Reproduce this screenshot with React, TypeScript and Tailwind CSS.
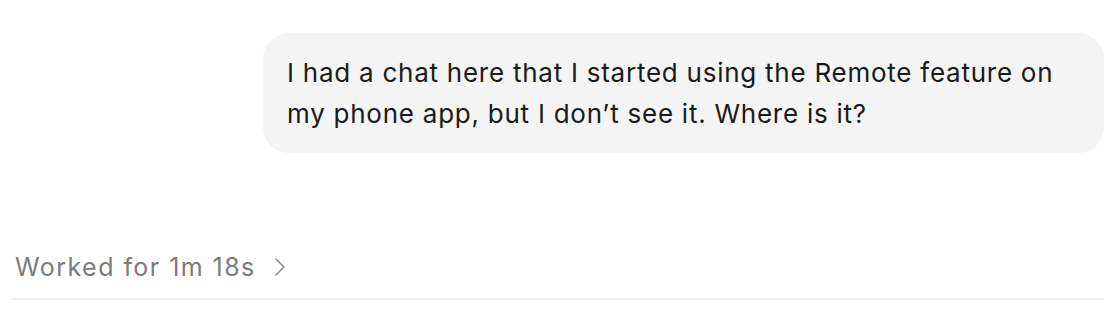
import React from "react";

export default function App() {
  return (
    <div className="w-[1120px] h-[326px] bg-white font-['Inter','Noto_Sans',sans-serif] overflow-hidden">
      <div className="flex justify-end pt-[33px] pr-[16px]">
        <div className="w-[841px] rounded-[26px] bg-[#f4f4f4] pl-[24px] pr-[36px] py-[19px] text-[26px] leading-[41px] text-[#1a1a1a] tracking-[0.75px]">
          I had a chat here that I started using the Remote feature on my phone app, but I don’t see it. Where is it?
        </div>
      </div>
      <div className="mt-[96px] ml-[12px] mr-[16px]">
        <div className="flex items-center gap-[16px] pl-[3px] text-[25px] leading-[36px] text-[#7b7b7b] tracking-[1.45px]">
          <span>Worked for 1m 18s</span>
          <svg width="14" height="20" viewBox="0 0 14 20" fill="none" stroke="#8a8a8a" strokeWidth="1.6" strokeLinecap="round" strokeLinejoin="round">
            <path d="M4 2l8 8-8 8" />
          </svg>
        </div>
        <div className="mt-[13px] h-[2px] bg-[#ededed]" />
      </div>
    </div>
  );
}
